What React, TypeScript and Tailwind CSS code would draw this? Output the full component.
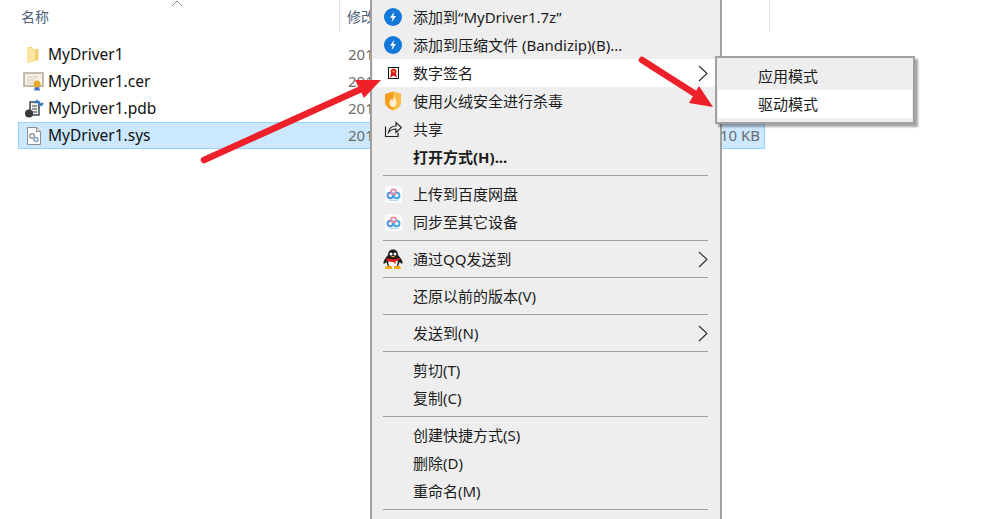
import type { ReactNode } from 'react'

const FONT = '"Noto Sans", "Noto Sans CJK SC", sans-serif'

function FolderIcon() {
	return (
		<svg width="20" height="20" viewBox="0 0 20 20">
			<path d="M3 2h5l1.500 2h5v11L3 18z" fill="#f3d072" />
			<path d="M3 2l8 2v12.500L3 18z" fill="#fbe6a4" />
		</svg>
	)
}

function CertIcon() {
	return (
		<svg width="21" height="20" viewBox="0 0 21 20">
			<rect x="1" y="1" width="19" height="13" fill="#f6f1e6" stroke="#b3a793" strokeWidth="1.500" />
			<path d="M4 5h11M4 8h8M4 11h6" stroke="#cfc8b8" />
			<path d="M12 14l-1 5 2-1 1 1 1-1 2 1-1-5z" fill="#3f74c4" />
			<circle cx="14" cy="12" r="3.500" fill="#e2a92b" />
		</svg>
	)
}

function PdbIcon() {
	return (
		<svg width="20" height="20" viewBox="0 0 20 20">
			<path d="M6 3h9v13H6z" fill="#f1f1f1" stroke="#3e4650" strokeWidth="1.500" />
			<path d="M8 7h5M8 10h5M8 13h5" stroke="#3e4650" />
			<path d="M11 4l2-2 4 4 2-2" stroke="#2f79c9" strokeWidth="2.200" fill="none" />
			<circle cx="5" cy="14.500" r="4" fill="#3a3a3a" />
		</svg>
	)
}

function SysIcon() {
	return (
		<svg width="16" height="20" viewBox="0 0 16 20">
			<path d="M1.500 1.500h9l4 4v13h-13z" fill="#fbfbfb" stroke="#8d8d8d" />
			<path d="M10.500 1.500v4h4" fill="#e4e4e4" stroke="#8d8d8d" />
			<circle cx="6" cy="10" r="2.300" fill="none" stroke="#9a9a9a" strokeWidth="1.400" />
			<circle cx="10" cy="13.500" r="2" fill="none" stroke="#85a5c8" strokeWidth="1.400" />
		</svg>
	)
}

function BandizipIcon() {
	return (
		<svg width="18" height="18" viewBox="0 0 18 18">
			<circle cx="9" cy="9" r="9" fill="#1379d8" />
			<path d="M10.300 3.800L6 9.800h2.600l-1 4.400 4.400-6.200H9.300z" fill="#fff" />
		</svg>
	)
}

function SignIcon() {
	return (
		<svg width="11" height="12" viewBox="0 0 11 12">
			<rect x="0.500" y="0.500" width="10" height="11" fill="#fdf4ee" stroke="#1a1a1a" />
			<path d="M3.200 6l-1 4.500 3.300-2 3.300 2-1-4.500z" fill="#d8101c" />
			<circle cx="5.500" cy="4.500" r="2.800" fill="#e8141e" />
			<circle cx="5.500" cy="4.500" r="1" fill="#f5d33c" />
		</svg>
	)
}

function ShieldIcon() {
	return (
		<svg width="18" height="20" viewBox="0 0 18 20">
			<path d="M1 3l8-2.500L17 3v8c0 4-4 7-8 8.500C5 18 1 15 1 11z" fill="#f59f1c" />
			<path d="M9 .500L17 3v8c0 4-4 7-8 8.500z" fill="#fabd45" />
			<path d="M10 4c.300 2.500 2.500 4.500 2.500 8 0 2.200-1.500 4-3.500 4s-3.500-1.800-3.500-4c0-1.800 1-2.800 1.500-4 .800.400 1.200 1 1.300 1.800C9.300 8.300 10.200 6 10 4z" fill="#fff1d6" />
		</svg>
	)
}

function ShareIcon() {
	return (
		<svg width="18" height="18" viewBox="0 0 18 18" fill="none" stroke="#222" strokeWidth="1.200">
			<path d="M1.500 6.500v10h12.500v-4" />
			<path d="M4.500 12.500c.500-4 3.500-6.500 7.500-6.500V2.500l5.500 5-5.500 5V9c-3 0-5.500 1-7.500 3.500z" fill="#eee" />
		</svg>
	)
}

function BaiduIcon() {
	return (
		<svg width="17" height="17" viewBox="0 0 16 16" fill="none">
			<rect width="16" height="16" rx="3" fill="#fbfbfb" />
			<circle cx="5" cy="9" r="2.600" stroke="#4a93e8" strokeWidth="1.800" />
			<circle cx="11" cy="9" r="2.600" stroke="#3fa9e8" strokeWidth="1.800" />
			<circle cx="8" cy="5.500" r="2.400" stroke="#e88aa0" strokeWidth="1.600" />
			<path d="M4 13.500h8" stroke="#a9d4f2" />
		</svg>
	)
}

function QQIcon() {
	return (
		<svg width="20" height="21" viewBox="0 0 20 21">
			<path d="M10 .500c3.500 0 5 2.500 5 5.500 2.500 3 5 6 4.500 8.500-.500.500-2.500-.500-3-1.500-.500 2-1 3-1.500 4h-10c-.500-1-1-2-1.500-4-.500 1-2.500 2-3 1.500-.500-2.500 2-5.500 4.500-8.500 0-3 1.500-5.500 5-5.500z" fill="#1c1c1c" />
			<path d="M5.500 11c2 2 7 2 9 0 .500 3 0 5-1 6h-7c-1-1-1.500-3-1-6z" fill="#fff" />
			<path d="M3.500 9c3.500 1.500 9.500 1.500 13 0v2l-4 1v3.500l-2-2.500c-2 0-5.500-.500-7-1.500z" fill="#e0201c" />
			<circle cx="8" cy="5" r="1.500" fill="#fff" />
			<circle cx="12" cy="5" r="1.500" fill="#fff" />
			<path d="M7.500 7h5l-2.500 1.500z" fill="#f2b01e" />
			<path d="M3 17h6v3H2zM11 17h6l1 3h-7z" fill="#f2a81a" />
		</svg>
	)
}

function Chevron() {
	return (
		<svg width="10" height="17" viewBox="0 0 10 17" fill="none" stroke="#2b2b2b" strokeWidth="1.100">
			<path d="M1 1l8 7.500-8 7.500" />
		</svg>
	)
}

type MenuItem = {
	label: string
	icon?: ReactNode
	arrow?: boolean
	bold?: boolean
	active?: boolean
}

function Item({ label, icon, arrow, bold, active }: MenuItem) {
	return (
		<div className={`flex h-7 items-center mx-px pr-[11px] ${active ? 'bg-white' : ''}`}>
			<div className="flex w-10 shrink-0 justify-center">{icon}</div>
			<span className={`grow text-[15px] text-[#1c1c1c] ${bold ? 'font-bold' : ''}`}>{label}</span>
			{arrow && <Chevron />}
		</div>
	)
}

function Sep() {
	return (
		<div className="h-[9px] pl-[11px] pr-[12px] pt-1">
			<div className="h-px bg-[#a0a0a0]" />
		</div>
	)
}

const rows = [
	{ name: 'MyDriver1', icon: <FolderIcon /> },
	{ name: 'MyDriver1.cer', icon: <CertIcon /> },
	{ name: 'MyDriver1.pdb', icon: <PdbIcon /> },
	{ name: 'MyDriver1.sys', icon: <SysIcon />, selected: true, size: '10 KB' }
]

function Explorer() {
	return (
		<div>
			<div className="flex h-8 text-[14px] text-[#4c607a]">
				<div className="relative flex w-[340px] items-center border-r border-[#e5e5e5] pl-[21px]">
					名称
					<svg className="absolute left-[171px] top-0" width="12" height="7" viewBox="0 0 12 7" fill="none" stroke="#8a8a8a">
						<path d="M1 6l5-5 5 5" />
					</svg>
				</div>
				<div className="flex w-[430px] items-center border-r border-[#e5e5e5] pl-[7px]">修改</div>
			</div>
			<div className="ml-[18px] mt-[9px] w-[747px]">
				{rows.map(row => (
					<div
						key={row.name}
						className={`flex h-[27px] items-center ${
							row.selected ? 'border border-[#99d1ff] bg-[#cce8ff]' : 'border border-transparent'
						}`}>
						<div className="flex w-[29px] shrink-0 justify-center">{row.icon}</div>
						<span className="w-[300px] shrink-0 text-[15.5px] text-[#111]">{row.name}</span>
						<span className="text-[15px] text-[#6d6d6d]">2019</span>
						{row.size && <span className="ml-auto mr-1 text-[15px] text-[#6d6d6d]">{row.size}</span>}
					</div>
				))}
			</div>
		</div>
	)
}

function ContextMenu() {
	return (
		<div className="absolute left-[370px] top-0 h-[519px] w-[352px] border-x-2 border-[#a0a0a0] bg-[#eeeeee] pt-[3px]">
			<Item label="添加到“MyDriver1.7z”" icon={<BandizipIcon />} />
			<Item label="添加到压缩文件 (Bandizip)(B)..." icon={<BandizipIcon />} />
			<Item label="数字签名" icon={<SignIcon />} arrow active />
			<Item label="使用火绒安全进行杀毒" icon={<ShieldIcon />} />
			<Item label="共享" icon={<ShareIcon />} />
			<Item label="打开方式(H)..." bold />
			<Sep />
			<Item label="上传到百度网盘" icon={<BaiduIcon />} />
			<Item label="同步至其它设备" icon={<BaiduIcon />} />
			<Sep />
			<Item label="通过QQ发送到" icon={<QQIcon />} arrow />
			<Sep />
			<Item label="还原以前的版本(V)" />
			<Sep />
			<Item label="发送到(N)" arrow />
			<Sep />
			<Item label="剪切(T)" />
			<Item label="复制(C)" />
			<Sep />
			<Item label="创建快捷方式(S)" />
			<Item label="删除(D)" />
			<Item label="重命名(M)" />
			<Sep />
		</div>
	)
}

function SubMenu() {
	return (
		<div className="absolute left-[715px] top-[56px] h-[68px] w-[200px] border-2 border-[#a0a0a0] bg-[#eeeeee] pt-1 shadow-[3px_3px_2px_rgba(0,0,0,0.35)]">
			<div className="flex h-7 items-center pl-[41px] text-[15px] text-[#1c1c1c]">应用模式</div>
			<div className="mx-px flex h-7 items-center bg-white pl-10 text-[15px] text-[#1c1c1c]">驱动模式</div>
		</div>
	)
}

function Arrows() {
	return (
		<svg className="pointer-events-none absolute left-0 top-0" width="1008" height="519" viewBox="0 0 1008 519">
			<path d="M204 160L368 86" stroke="#ee2029" strokeWidth="6.500" strokeLinecap="round" />
			<path d="M381 80L355 80L364 98z" fill="#ee2029" />
			<path d="M642 60L700 97" stroke="#ee2029" strokeWidth="6.500" strokeLinecap="round" />
			<path d="M713 107L699 86L689 103z" fill="#ee2029" />
		</svg>
	)
}

export default function App() {
	return (
		<div className="relative h-[519px] w-[1008px] overflow-hidden bg-white" style={{ fontFamily: FONT }}>
			<Explorer />
			<ContextMenu />
			<SubMenu />
			<Arrows />
		</div>
	)
}
